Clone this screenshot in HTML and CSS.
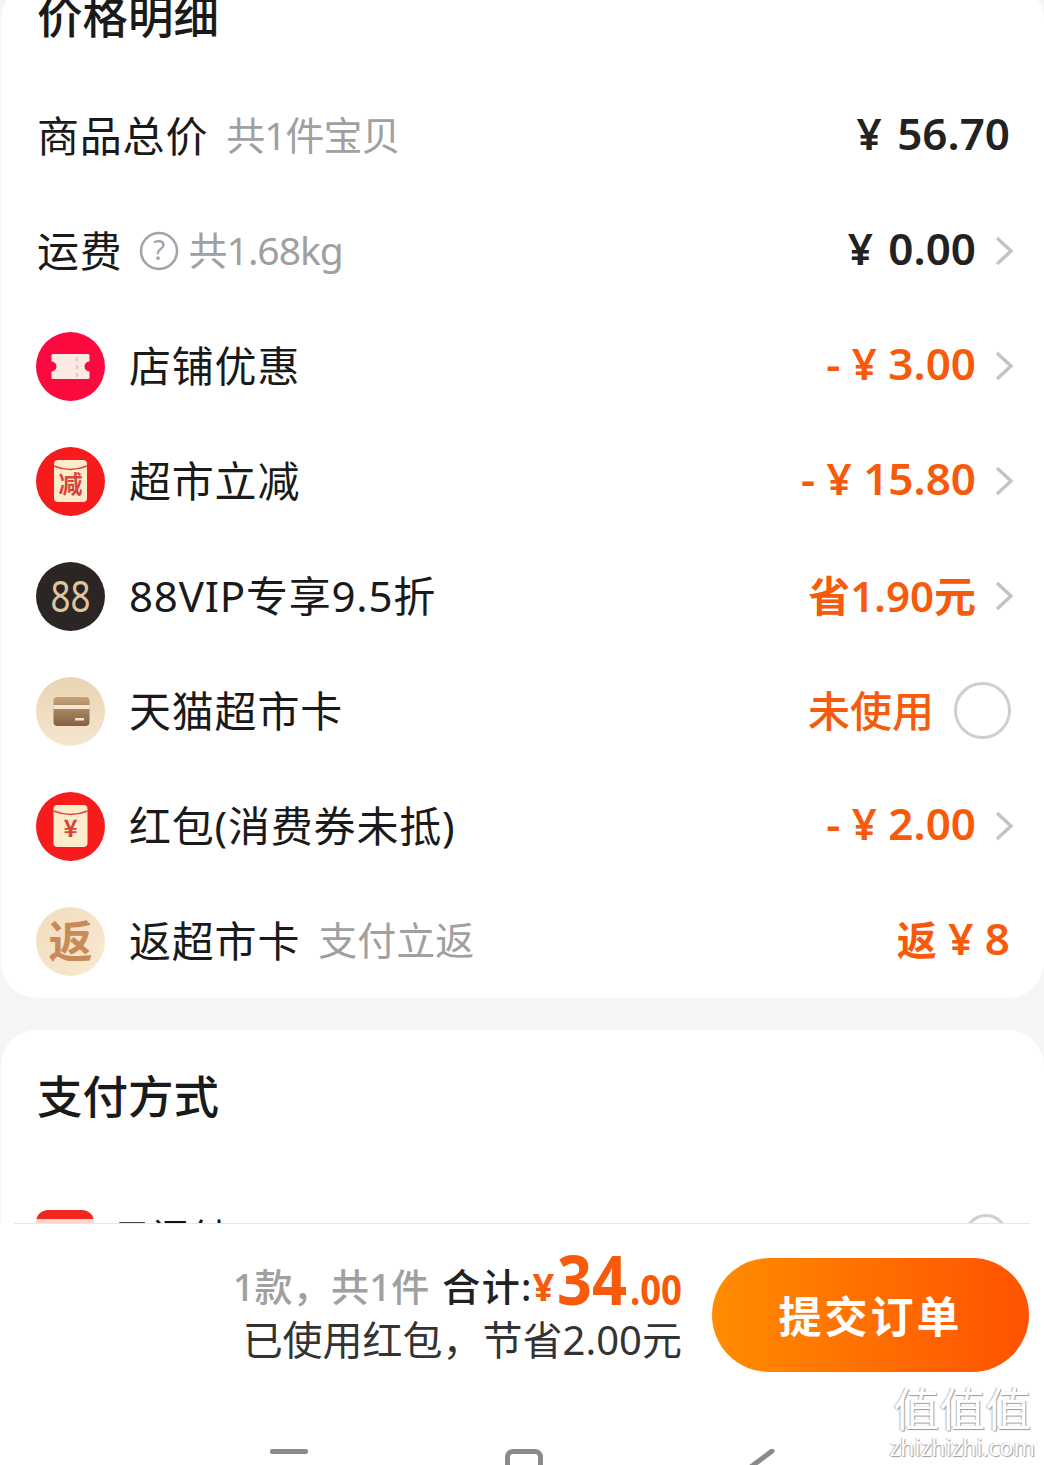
FILE: index.html
```html
<!DOCTYPE html>
<html lang="zh-CN">
<head>
  <meta charset="UTF-8">
  <title>确认订单</title>
  <link rel="stylesheet" href="styles.css">
</head>
<body>
  <div class="scroll-area">
    <section class="card price-card">
      <h2 class="card-title">价格明细</h2>

      <div class="row">
        <div class="row-left"><span class="label">商品总价</span><span class="sub sub-narrow">共1件宝贝</span></div>
        <div class="row-right"><span class="price dark"><span class="yen-sign">¥</span> 56.70</span></div>
      </div>

      <div class="row">
        <div class="row-left">
          <span class="label">运费</span>
          <svg class="help" viewBox="0 0 40 40"><circle cx="20" cy="20" r="18" fill="none" stroke="#a3a3a3" stroke-width="2.5"/><text x="20" y="29" text-anchor="middle" class="help-mark">?</text></svg>
          <span class="sub sub-tight">共1.68kg</span>
        </div>
        <div class="row-right"><span class="price dark"><span class="yen-sign">¥</span> 0.00</span><svg class="chev" viewBox="0 0 18 30"><path d="M2 2l14 13L2 28"/></svg></div>
      </div>

      <div class="row">
        <div class="row-left">
          <svg class="icon" viewBox="0 0 69 69"><circle cx="34.500" cy="34.500" r="34.500" fill="#fb0a40"/><path d="M17 22h35a1.500 1.500 0 0 1 1.500 1.500v6a5 5 0 0 0 0 10v6a1.500 1.500 0 0 1-1.500 1.500H17a1.500 1.500 0 0 1-1.500-1.500v-6a5 5 0 0 0 0-10v-6A1.500 1.500 0 0 1 17 22z" fill="#fbe9e4"/><path d="M41 25v20" stroke="#e8c9c4" stroke-width="2.500" stroke-dasharray="4 4"/></svg>
          <span class="label">店铺优惠</span>
        </div>
        <div class="row-right"><span class="price orange">- ¥ 3.00</span><svg class="chev" viewBox="0 0 18 30"><path d="M2 2l14 13L2 28"/></svg></div>
      </div>

      <div class="row">
        <div class="row-left">
          <svg class="icon" viewBox="0 0 69 69"><circle cx="34.500" cy="34.500" r="34.500" fill="#f71c1c"/><rect x="18" y="13" width="33" height="42" rx="4" fill="#fdeccb"/><path d="M18 19q16 7 33 0" fill="none" stroke="#e0453a" stroke-width="1.500"/><text x="34.500" y="46" text-anchor="middle" class="env-text">减</text></svg>
          <span class="label">超市立减</span>
        </div>
        <div class="row-right"><span class="price orange">- ¥ 15.80</span><svg class="chev" viewBox="0 0 18 30"><path d="M2 2l14 13L2 28"/></svg></div>
      </div>

      <div class="row">
        <div class="row-left">
          <svg class="icon" viewBox="0 0 69 69"><circle cx="34.500" cy="34.500" r="34.500" fill="#2b2523"/><text x="34.500" y="50" text-anchor="middle" textLength="40" lengthAdjust="spacingAndGlyphs" class="vip-text">88</text></svg>
          <span class="label">88VIP专享9.5折</span>
        </div>
        <div class="row-right"><span class="price orange price-small">省1.90元</span><svg class="chev" viewBox="0 0 18 30"><path d="M2 2l14 13L2 28"/></svg></div>
      </div>

      <div class="row">
        <div class="row-left">
          <svg class="icon" viewBox="0 0 69 69">
            <defs>
              <linearGradient id="beige" x1="0" y1="0" x2="0" y2="1"><stop offset="0" stop-color="#e9d4b2"/><stop offset="1" stop-color="#f5e6d0"/></linearGradient>
              <linearGradient id="cardfill" x1="0" y1="0" x2="0" y2="1"><stop offset="0" stop-color="#c4a27a"/><stop offset="1" stop-color="#84603f"/></linearGradient>
            </defs>
            <circle cx="34.500" cy="34.500" r="34.500" fill="url(#beige)"/>
            <rect x="17.500" y="20" width="36" height="29" rx="4" fill="url(#cardfill)"/>
            <rect x="17.500" y="28" width="36" height="4" fill="#f4e6d0"/>
            <rect x="39" y="41" width="9" height="2.500" fill="#f4e6d0"/>
          </svg>
          <span class="label">天猫超市卡</span>
        </div>
        <div class="row-right"><span class="price orange unused">未使用</span><span class="radio"></span></div>
      </div>

      <div class="row">
        <div class="row-left">
          <svg class="icon" viewBox="0 0 69 69"><circle cx="34.500" cy="34.500" r="34.500" fill="#f71c1c"/><rect x="17.500" y="13" width="34" height="42" rx="4" fill="#fdeccb"/><path d="M17.500 19q17 7 34 0" fill="none" stroke="#e0453a" stroke-width="1.500"/><text x="34.500" y="45" text-anchor="middle" class="env-text">¥</text></svg>
          <span class="label">红包(消费券未抵)</span>
        </div>
        <div class="row-right"><span class="price orange">- ¥ 2.00</span><svg class="chev" viewBox="0 0 18 30"><path d="M2 2l14 13L2 28"/></svg></div>
      </div>

      <div class="row">
        <div class="row-left">
          <svg class="icon" viewBox="0 0 69 69">
            <defs><linearGradient id="peach" x1="0" y1="0" x2="1" y2="1"><stop offset="0" stop-color="#f1dcbd"/><stop offset="1" stop-color="#fae9d2"/></linearGradient></defs>
            <circle cx="34.500" cy="34.500" r="34.500" fill="url(#peach)"/>
            <text x="34.500" y="51" text-anchor="middle" class="back-text">返</text>
          </svg>
          <span class="label">返超市卡</span><span class="sub">支付立返</span>
        </div>
        <div class="row-right"><span class="price orange"><span class="price-cjk">返</span> ¥ 8</span></div>
      </div>
    </section>

    <section class="card pay-card">
      <h2 class="card-title">支付方式</h2>
      <div class="pay-row">
        <span class="pay-icon"></span>
        <span class="pay-label">云闪付</span>
        <span class="radio pay-radio"></span>
      </div>
    </section>
  </div>

  <footer class="bottom-bar">
    <div class="bar-line"></div>
    <div class="bar-main">
      <div class="summary">
        <div class="summary-top">
          <span class="count">1款，共1件</span>
          <span class="total-label">合计:</span><span class="total"><span class="yen">¥</span><span class="big">34</span><span class="cents">.00</span></span>
        </div>
        <div class="summary-bottom">已使用红包，节省2.00元</div>
      </div>
      <button class="submit">提交订单</button>
    </div>
    <div class="nav-bar">
      <span class="nav-menu"></span>
      <span class="nav-home"></span>
      <svg class="nav-back" viewBox="0 0 30 20"><path d="M27 2L3 20"/></svg>
    </div>
  </footer>

  <div class="watermark">
    <div class="wm-logo">值值值</div>
    <div class="wm-url">zhizhizhi.com</div>
  </div>
</body>
</html>
```

FILE: styles.css
```css
* {
  box-sizing: border-box;
}

html, body {
  margin: 0;
  height: 100%;
}

body {
  position: relative;
  height: 1465px;
  overflow: hidden;
  background-color: #fff;
  font-family: "Noto Sans", "Noto Sans CJK SC", sans-serif;
  color: #111;
}

/* 滚动区域 */
.scroll-area {
  height: 1223px;
  overflow: hidden;
  background-color: #f5f5f5;
  padding-left: 1px;
}

.card {
  background-color: #fff;
  border-radius: 36px;
  padding-left: 36px;
}

.price-card {
  margin-top: -16px;
  height: 1014px;
}

.pay-card {
  margin-top: 32px;
  padding-top: 34px;
  height: 300px;
}

.card-title {
  margin: 0;
  font-family: "Noto Sans CJK SC", sans-serif;
  font-size: 45.500px;
  line-height: 60px;
  font-weight: 500;
  color: #1a1a1a;
}

.price-card .card-title {
  margin-bottom: 34px;
}

/* 价格行 */
.row {
  display: flex;
  align-items: center;
  justify-content: space-between;
  height: 115px;
  padding-right: 31px;
}

.row-left,
.row-right {
  display: flex;
  align-items: center;
}

.label {
  margin-bottom: 5px;
  font-size: 42px;
  letter-spacing: 0.8px;
  color: #1a1a1a;
}

.sub {
  margin-left: 18px;
  margin-bottom: 5px;
  font-size: 39px;
  color: #a0a0a0;
}

.sub-narrow {
  letter-spacing: -1px;
}

.sub-tight {
  margin-left: 10px;
  letter-spacing: -1px;
}

.help {
  width: 40px;
  height: 40px;
  margin-left: 16px;
}

.help-mark {
  font-family: "Noto Sans", sans-serif;
  font-size: 28px;
  fill: #a3a3a3;
}

.icon {
  width: 69px;
  height: 69px;
  margin-top: 2px;
  margin-left: -1px;
  margin-right: 24px;
  flex-shrink: 0;
}

.env-text {
  font-family: "Noto Sans CJK SC", sans-serif;
  font-size: 24px;
  font-weight: 700;
  fill: #d8433a;
}

.vip-text {
  font-family: "Noto Sans", sans-serif;
  font-size: 44px;
  font-weight: 400;
  fill: #dfc49e;
}

.back-text {
  font-family: "Noto Sans CJK SC", sans-serif;
  font-size: 44px;
  font-weight: 700;
  fill: #c98a57;
}

.price {
  margin-bottom: 5px;
  font-size: 44px;
  font-weight: 600;
  white-space: nowrap;
}

.price-small {
  font-size: 42px;
}

.price-cjk {
  font-size: 40px;
}

.row-right .price:only-child {
  margin-right: 3px;
}

.yen-sign {
  margin-right: 4px;
}

.dark {
  color: #222;
}

.orange {
  color: #f85a0b;
}

.unused {
  margin-right: 20px;
  font-size: 42px;
  font-weight: 500;
}

.chev {
  width: 18px;
  height: 30px;
  margin-left: 19px;
}

.chev path {
  fill: none;
  stroke: #c4c4c4;
  stroke-width: 3.500;
}

.radio {
  display: block;
  width: 57px;
  height: 57px;
  margin-right: 2px;
  border: 3px solid #cfcfcf;
  border-radius: 50%;
}

/* 支付方式 */
.pay-row {
  position: relative;
  display: flex;
  align-items: flex-start;
  margin-top: 86px;
  margin-left: -1px;
  padding-right: 36px;
}

.pay-icon {
  width: 58px;
  height: 58px;
  border-radius: 12px;
  background: linear-gradient(#f0281e 9px, #fbd5cc 9px);
}

.pay-label {
  margin-left: 19px;
  font-size: 38px;
  line-height: 40px;
  margin-top: 5px;
  font-family: "Noto Sans CJK SC", sans-serif;
}

.pay-radio {
  width: 44px;
  height: 44px;
  margin-left: auto;
  margin-top: 4px;
  margin-right: 0;
}

/* 底部栏 */
.bottom-bar {
  height: 242px;
  background-color: #fff;
  overflow: hidden;
}

.bar-line {
  height: 1px;
  margin: 0 14px;
  background-color: #e8e8e8;
}

.bar-main {
  display: flex;
  justify-content: flex-end;
  align-items: flex-start;
  gap: 30px;
  padding-top: 34px;
  padding-right: 15px;
}

.summary {
  margin-top: -12px;
  text-align: right;
}

.summary-top {
  display: flex;
  align-items: baseline;
  justify-content: flex-end;
  height: 58px;
  margin-bottom: 11px;
  line-height: 58px;
  font-size: 38px;
  font-weight: 500;
}

.count {
  margin-right: 13px;
  letter-spacing: 0.2px;
  color: #a0a0a0;
}

.total-label {
  letter-spacing: 1.300px;
  color: #222;
}

.total {
  color: #f85a0b;
  font-weight: 700;
}

.yen {
  font-size: 38px;
}

/* 数字是窄体，这里用 scaleX 压一下 */
.big {
  display: inline-block;
  font-size: 68px;
  margin: 0 -1px 0 -1px;
  transform: translateY(4px) scaleX(0.9);
}

.cents {
  display: inline-block;
  font-size: 42px;
  margin-left: -4px;
  margin-right: -4px;
  transform: translateY(4px) scaleX(0.87);
}

.summary-bottom {
  font-size: 40px;
  line-height: 50px;
  color: #333;
}

.submit {
  width: 317px;
  height: 114px;
  padding-bottom: 4px;
  border: none;
  border-radius: 57px;
  background: linear-gradient(90deg, #ff8c00, #ff5200);
  color: #fff;
  font-family: "Noto Sans CJK SC", sans-serif;
  font-size: 43px;
  font-weight: 700;
  letter-spacing: 3px;
}

/* 系统导航 */
.nav-bar {
  display: flex;
  align-items: flex-start;
  margin-top: 77px;
  padding-left: 270px;
}

.nav-menu {
  width: 38px;
  height: 5px;
  border-radius: 2px;
  background-color: #8a8a8a;
}

.nav-home {
  width: 38px;
  height: 30px;
  margin-left: 197px;
  border: 5px solid #8a8a8a;
  border-radius: 8px;
}

.nav-back {
  width: 30px;
  height: 20px;
  margin-left: 202px;
}

.nav-back path {
  fill: none;
  stroke: #8a8a8a;
  stroke-width: 5;
  stroke-linecap: round;
}

/* 水印 */
.watermark {
  position: absolute;
  right: 9px;
  top: 1378px;
  text-align: center;
  color: #fff;
  font-family: "Noto Sans CJK SC", sans-serif;
  text-shadow: 1px 1px 1px #9a9a9a, -1px 0 1px #bbb;
}

.wm-logo {
  font-size: 46px;
  line-height: 56px;
  letter-spacing: 0;
}

.wm-url {
  font-family: "Noto Sans", sans-serif;
  font-size: 23px;
  line-height: 26px;
}
```
